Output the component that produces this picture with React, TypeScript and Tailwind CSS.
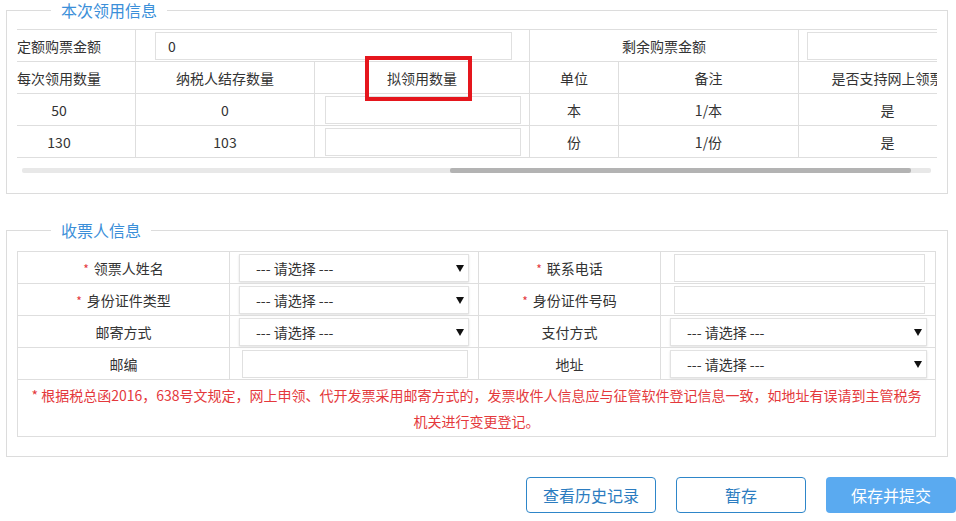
import React from "react";

const Arrow = () => (
  <svg width="8" height="8" viewBox="0 0 8 8" className="shrink-0">
    <path d="M0 1h8L4 8z" fill="#111" />
  </svg>
);

function Sel({ cls }: { cls: string }) {
  return (
    <div
      className={`flex items-center justify-between h-[28px] border border-[#e2e2e2] bg-white shadow-[0_1px_2px_rgba(0,0,0,0.12)] pl-[16px] pr-[4px] text-[#333] ${cls}`}
    >
      <span>--- 请选择 ---</span>
      <Arrow />
    </div>
  );
}

function Inp({ cls, value }: { cls: string; value?: string }) {
  return (
    <div className={`h-[28px] border border-[#e0e0e0] bg-white flex items-center pl-[12px] ${cls}`}>
      {value}
    </div>
  );
}

function Label({ text, star }: { text: string; star?: boolean }) {
  return (
    <span className="inline-flex items-center">
      {star && <span className="text-[#e4393c] text-[12px] mr-[5px] mt-[3px]">*</span>}
      {text}
    </span>
  );
}

export default function App() {
  const td = "border border-[#dedede] text-center align-middle p-0";
  return (
    <div className="relative w-[956px] h-[521px] overflow-hidden bg-white text-[14px] leading-[20px] text-[#333] font-['Noto_Sans_CJK_SC','Noto_Sans',sans-serif]">
      <div className="pl-[6px] pr-[8px]">
        <fieldset className="border border-[#dcdcdc] px-[10px] pt-[9px] pb-[20px]">
          <legend className="ml-[34px] px-[10px] text-[16px] leading-[20px] text-[#3b8fd9]">本次领用信息</legend>
          <div className="w-[920px] overflow-hidden">
            <table className="border-collapse table-fixed w-[994px] ml-[-35px]">
              <colgroup>
                <col className="w-[153px]" />
                <col className="w-[179px]" />
                <col className="w-[215px]" />
                <col className="w-[89px]" />
                <col className="w-[180px]" />
                <col className="w-[178px]" />
              </colgroup>
              <tbody>
                <tr className="h-[32px]">
                  <td className={td}>定额购票金额</td>
                  <td className={td} colSpan={2}>
                    <Inp cls="ml-[19px] w-[357px] text-left" value="0" />
                  </td>
                  <td className={td} colSpan={2}>剩余购票金额</td>
                  <td className={td}>
                    <Inp cls="ml-[8px] w-[165px]" />
                  </td>
                </tr>
                <tr className="h-[32px]">
                  <td className={td}>每次领用数量</td>
                  <td className={td}>纳税人结存数量</td>
                  <td className={td}>拟领用数量</td>
                  <td className={td}>单位</td>
                  <td className={td}>备注</td>
                  <td className={`${td} whitespace-nowrap`}>是否支持网上领票</td>
                </tr>
                <tr className="h-[32px]">
                  <td className={td}>50</td>
                  <td className={td}>0</td>
                  <td className={td}>
                    <Inp cls="ml-[10px] w-[196px]" />
                  </td>
                  <td className={td}>本</td>
                  <td className={td}>1/本</td>
                  <td className={td}>是</td>
                </tr>
                <tr className="h-[32px]">
                  <td className={td}>130</td>
                  <td className={td}>103</td>
                  <td className={td}>
                    <Inp cls="ml-[10px] w-[196px]" />
                  </td>
                  <td className={td}>份</td>
                  <td className={td}>1/份</td>
                  <td className={td}>是</td>
                </tr>
              </tbody>
            </table>
          </div>
          <div className="mt-[10px] ml-[5px] w-[909px] h-[5px] bg-[#e8e8e8] rounded-[2px]">
            <div className="ml-[428px] w-[461px] h-[5px] bg-[#b3b3b3] rounded-[2px]" />
          </div>
        </fieldset>

        <fieldset className="mt-[26px] border border-[#dcdcdc] px-[10px] pt-[11px] pb-[19px]">
          <legend className="ml-[34px] px-[10px] text-[16px] leading-[20px] text-[#3b8fd9]">收票人信息</legend>
          <table className="border-collapse table-fixed w-[918px]">
            <colgroup>
              <col className="w-[212px]" />
              <col className="w-[249px]" />
              <col className="w-[182px]" />
              <col className="w-[275px]" />
            </colgroup>
            <tbody>
              <tr className="h-[32px]">
                <td className={td}><Label text="领票人姓名" star /></td>
                <td className={td}><Sel cls="ml-[9px] w-[230px]" /></td>
                <td className={td}><Label text="联系电话" star /></td>
                <td className={td}><Inp cls="ml-[13px] w-[251px]" /></td>
              </tr>
              <tr className="h-[32px]">
                <td className={td}><Label text="身份证件类型" star /></td>
                <td className={td}><Sel cls="ml-[9px] w-[230px]" /></td>
                <td className={td}><Label text="身份证件号码" star /></td>
                <td className={td}><Inp cls="ml-[13px] w-[251px]" /></td>
              </tr>
              <tr className="h-[32px]">
                <td className={td}>邮寄方式</td>
                <td className={td}><Sel cls="ml-[9px] w-[230px]" /></td>
                <td className={td}>支付方式</td>
                <td className={td}><Sel cls="ml-[9px] w-[257px]" /></td>
              </tr>
              <tr className="h-[32px]">
                <td className={td}>邮编</td>
                <td className={td}><Inp cls="ml-[12px] w-[226px]" /></td>
                <td className={td}>地址</td>
                <td className={td}><Sel cls="ml-[9px] w-[257px]" /></td>
              </tr>
              <tr>
                <td className={`${td} px-[10px] py-[2px] leading-[26px] text-[#e4393c]`} colSpan={4}>
                  * 根据税总函2016，638号文规定，网上申领、代开发票采用邮寄方式的，发票收件人信息应与征管软件登记信息一致，如地址有误请到主管税务机关进行变更登记。
                </td>
              </tr>
            </tbody>
          </table>
        </fieldset>
      </div>

      <div className="mt-[20px] flex justify-end gap-[20px]">
        <button className="w-[130px] h-[36px] rounded-[4px] border border-[#2e86c9] text-[#2b7cc0] text-[16px] bg-white">查看历史记录</button>
        <button className="w-[130px] h-[36px] rounded-[4px] border border-[#2e86c9] text-[#2b7cc0] text-[16px] bg-white">暂存</button>
        <button className="w-[130px] h-[36px] rounded-[4px] bg-[#5aaaf0] text-white text-[16px]">保存并提交</button>
      </div>

      <div className="absolute left-[365px] top-[56px] w-[107px] h-[45px] border-[4px] border-[#e5161d]" />
    </div>
  );
}
